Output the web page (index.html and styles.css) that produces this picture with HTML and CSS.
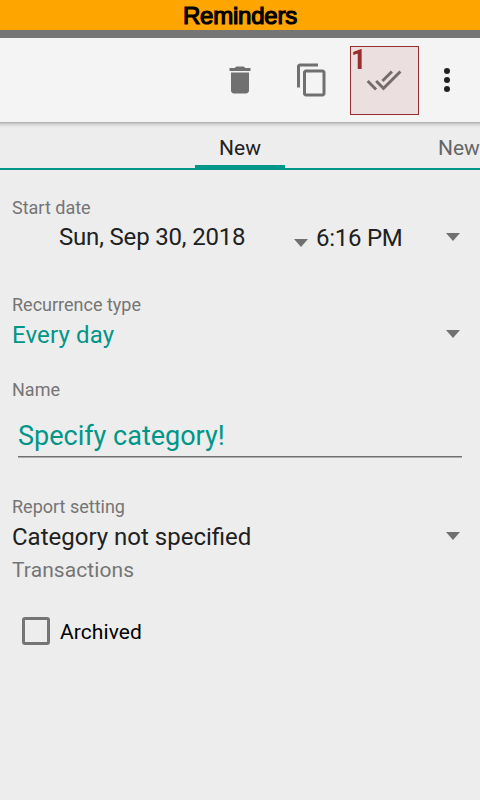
FILE: index.html
```html
<!DOCTYPE html>
<html lang="en">
<head>
<meta charset="utf-8">
<title>Reminders</title>
<link rel="stylesheet" href="styles.css">
</head>
<body>
<div class="banner">Reminders</div>
<div class="statusbar"></div>
<header class="toolbar">
  <svg class="icon delete" viewBox="0 0 24 24"><path d="M6 19c0 1.1.9 2 2 2h8c1.1 0 2-.9 2-2V7H6v12zM19 4h-3.500l-1-1h-5l-1 1H5v2h14V4z"/></svg>
  <svg class="icon copy" viewBox="0 0 24 24"><path d="M16 1H4c-1.100 0-2 .9-2 2v14h2V3h12V1zm3 4H8c-1.100 0-2 .9-2 2v14c0 1.100.9 2 2 2h11c1.100 0 2-.9 2-2V7c0-1.100-.9-2-2-2zm0 16H8V7h11v14z"/></svg>
  <div class="marked">
    <span class="number">1</span>
    <svg class="icon" viewBox="0 0 24 24"><path d="M18 7l-1.410-1.410-6.340 6.340 1.410 1.410L18 7zm4.240-1.410L11.660 16.170 7.480 12l-1.410 1.410L11.660 19l12-12-1.420-1.410zM.41 13.410L6 19l1.410-1.410L1.830 12 .41 13.410z"/></svg>
  </div>
  <svg class="more" viewBox="0 0 8 26"><circle cx="4" cy="4" r="3"/><circle cx="4" cy="13" r="3"/><circle cx="4" cy="22" r="3"/></svg>
</header>
<nav class="tabs">
  <div class="tab active">New</div>
  <div class="tab next">New</div>
</nav>
<main class="form">
  <section class="start">
    <div class="label">Start date</div>
    <div class="row">
      <div class="value date">Sun, Sep 30, 2018</div>
      <i class="arrow date-arrow"></i>
      <div class="value time">6:16 PM</div>
      <i class="arrow end"></i>
    </div>
  </section>
  <section class="recurrence">
    <div class="label">Recurrence type</div>
    <div class="row">
      <div class="value accent">Every day</div>
      <i class="arrow end"></i>
    </div>
  </section>
  <section class="name">
    <div class="label">Name</div>
    <div class="input">Specify category!</div>
  </section>
  <section class="report">
    <div class="label">Report setting</div>
    <div class="row">
      <div class="value">Category not specified</div>
      <i class="arrow end"></i>
    </div>
    <div class="sub">Transactions</div>
  </section>
  <section class="archived">
    <span class="box"></span>
    <span>Archived</span>
  </section>
</main>
</body>
</html>
```

FILE: styles.css
```css
* { box-sizing: border-box; }

body {
  margin: 0;
  width: 480px;
  height: 800px;
  overflow: hidden;
  background: #ededed;
  font-family: Roboto, sans-serif;
  color: #212121;
}

.banner {
  height: 30px;
  background: #ffa500;
  color: #000;
  font: 24px/31px "Liberation Sans", Arial, sans-serif;
  letter-spacing: -.2px;
  -webkit-text-stroke: 1.200px #000;
  text-align: center;
}

.statusbar { height: 8px; background: #757575; }

.toolbar {
  display: flex;
  height: 84px;
  padding-top: 8px;
  background: #f4f4f4;
}

.icon { width: 36px; height: 36px; fill: #707070; }
.delete { margin: 16px 0 0 222px; }
.copy { margin: 16px 0 0 36px; }

.marked {
  position: relative;
  width: 69px;
  height: 69px;
  margin-left: 20px;
  padding: 15px 0 0 15px;
  border: 1px solid #962d2e;
  background: #ebe0df;
}
.marked .icon { fill: #756c6b; }

.number {
  position: absolute;
  left: 0;
  top: -1px;
  font: bold 27px/28px Roboto, sans-serif;
  color: #962d2e;
}

.more { width: 8px; height: 26px; margin: 21px 0 0 24px; fill: #212121; }

.tabs {
  display: flex;
  height: 48px;
  border-bottom: 2px solid #009688;
  background: linear-gradient(#aaa, #cfcfcf 2px, #e4e4e4 4px, #ededed 6px);
  font-size: 21px;
  line-height: 24px;
}
.tab { flex: none; padding-top: 14px; }
.active {
  width: 90px;
  margin-left: 195px;
  height: 46px;
  border-bottom: 3px solid #009688;
  text-align: center;
}
.next { margin-left: 153px; color: #666; }

.form { padding: 28px 12px 0; }
.row { display: flex; align-items: flex-start; height: 28px; }
.label { color: #757575; font-size: 18px; line-height: 20px; }
.value { font-size: 24px; line-height: 28px; white-space: nowrap; }
.accent { color: #009688; letter-spacing: .15px; }

.arrow {
  width: 14px;
  height: 8px;
  margin-top: 9px;
  background: #707070;
  clip-path: polygon(0 0, 100% 0, 50% 100%);
}
.end { margin-left: auto; margin-right: 8px; }

.start { height: 97px; }
.start .row { margin-top: 5px; }
.start .end { margin-top: 10px; }
.date { flex: none; width: 235px; padding-left: 47px; letter-spacing: -.18px; }
.start .date-arrow { margin: 16px 0 0 47px; }
.time { margin: 1px 0 0 8px; letter-spacing: -.25px; }

.recurrence { height: 85px; }
.recurrence .row { margin-top: 6px; }

.name { height: 117px; }
.input {
  margin: 20px 6px 0;
  height: 38px;
  background: linear-gradient(#707070, #707070) 0 36px / 100% 1px no-repeat,
    linear-gradient(#b0b0b0, #b0b0b0) 0 37px / 100% 1px no-repeat;
  color: #009688;
  font-size: 27px;
  line-height: 32px;
}

.report .row { margin-top: 6px; }
.sub {
  margin-top: 7px;
  color: #757575;
  font-size: 21px;
  line-height: 24px;
  letter-spacing: .08px;
}

.archived {
  display: flex;
  align-items: flex-start;
  margin-top: 35px;
  padding-left: 10px;
  color: #000;
  font-size: 21px;
  line-height: 30px;
  letter-spacing: .08px;
}
.box {
  width: 28px;
  height: 28px;
  margin-right: 10px;
  border: 3px solid #757575;
  border-radius: 3px;
}
```
